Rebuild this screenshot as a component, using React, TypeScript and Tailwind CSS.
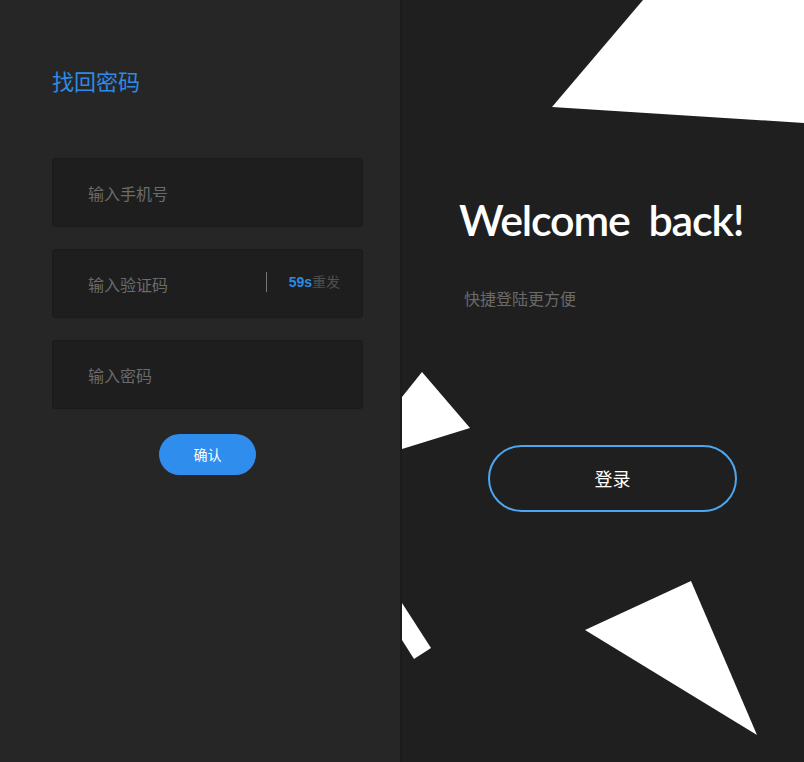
import React from "react";

export default function App() {
  const cjk = { fontFamily: '"Noto Sans CJK SC", "Noto Sans", sans-serif' };
  return (
    <div className="flex w-[804px] h-[762px] overflow-hidden" style={cjk}>
      <div className="w-[402px] shrink-0 h-full bg-[#262626] border-r-[2px] border-[#1b1b1b] flex flex-col pl-[52px]">
        <h1 className="mt-[64px] text-[22px] leading-[32px] text-[#2d8ae6] font-normal">找回密码</h1>
        <div className="mt-[62px] flex flex-col gap-[22px] w-[311px]">
          <div className="h-[69px] bg-[#1e1e1e] border border-[#1a1a1a] rounded-[3px] flex items-center pl-[35px] text-[16px] text-[#6b6b6b]">
            输入手机号
          </div>
          <div className="h-[69px] bg-[#1e1e1e] border border-[#1a1a1a] rounded-[3px] flex items-center pl-[35px] pr-[22px] text-[16px] text-[#6b6b6b]">
            <span className="flex-1">输入验证码</span>
            <span className="w-px h-[20px] bg-[#777] mr-[22px] -mt-[4px]"></span>
            <span className="text-[14px] -mt-[4px]">
              <span className="text-[#2d8ae6] font-bold" style={{ fontFamily: '"Liberation Sans", Arial, sans-serif' }}>59s</span>
              <span className="text-[#4f4f4f]">重发</span>
            </span>
          </div>
          <div className="h-[69px] bg-[#1e1e1e] border border-[#1a1a1a] rounded-[3px] flex items-center pl-[35px] text-[16px] text-[#6b6b6b]">
            输入密码
          </div>
        </div>
        <div className="w-[311px] flex justify-center mt-[25px]">
          <button className="w-[97px] h-[41px] rounded-full bg-[#2f8eed] text-white text-[14px]">确认</button>
        </div>
      </div>
      <div className="relative flex-1 h-full bg-[#1f1f1f] overflow-hidden">
        <svg className="absolute inset-0" width="402" height="762" viewBox="0 0 402 762">
          <polygon points="150,107 241,0 402,0 402,123" fill="#fff" />
          <polygon points="20,372 68,428 0,449 0,397" fill="#fff" />
          <polygon points="0,603 29,648 12,659 0,640" fill="#fff" />
          <polygon points="289,581 183,630 355,735" fill="#fff" />
        </svg>
        <div className="relative flex flex-col pl-[57px] pt-[190px]">
          <div className="text-[43px] leading-[60px] text-white font-semibold tracking-[-1.2px]" style={{ fontFamily: 'Lato, "Noto Sans", sans-serif' }}>
            Welcome&nbsp;&nbsp;back!
          </div>
          <div className="mt-[36px] pl-[5px] text-[16px] text-[#6a6a6a]">快捷登陆更方便</div>
          <div className="mt-[135px] pl-[29px]">
            <button className="w-[249px] h-[67px] rounded-full border-2 border-[#4da6f0] text-white text-[18px] bg-transparent">登录</button>
          </div>
        </div>
      </div>
    </div>
  );
}
